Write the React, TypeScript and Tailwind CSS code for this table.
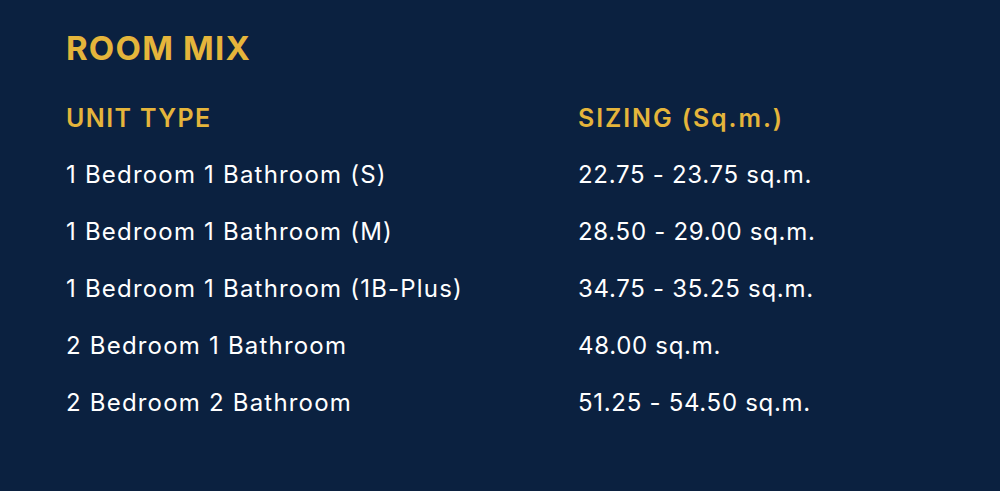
const rows: [string, string][] = [
  ["1 Bedroom 1 Bathroom (S)", "22.75 - 23.75 sq.m."],
  ["1 Bedroom 1 Bathroom (M)", "28.50 - 29.00 sq.m."],
  ["1 Bedroom 1 Bathroom (1B-Plus)", "34.75 - 35.25 sq.m."],
  ["2 Bedroom 1 Bathroom", "48.00 sq.m."],
  ["2 Bedroom 2 Bathroom", "51.25 - 54.50 sq.m."],
];

export default function App() {
  return (
    <div className="h-[491px] w-[1000px] bg-[#0b2140] pl-[66px] pt-[28px] font-['Inter',sans-serif]">
      <h2 className="text-[33px] font-bold leading-[40px] tracking-[1.2px] text-[#e5b53b]">ROOM MIX</h2>
      <div className="mt-[30px] grid grid-cols-[512px_1fr] text-[24px]">
        <div className="text-[25px] font-semibold leading-[40px] tracking-[1.4px] text-[#e5b53b]">UNIT TYPE</div>
        <div className="text-[25px] font-semibold leading-[40px] tracking-[1.9px] text-[#e5b53b]">SIZING (Sq.m.)</div>
        {rows.map(([type, size], i) => (
          <div key={i} className="contents">
            <div className="pt-[17px] leading-[40px] tracking-[1.2px] text-white">{type}</div>
            <div className="pt-[17px] leading-[40px] tracking-[0.7px] text-white">{size}</div>
          </div>
        ))}
      </div>
    </div>
  );
}
